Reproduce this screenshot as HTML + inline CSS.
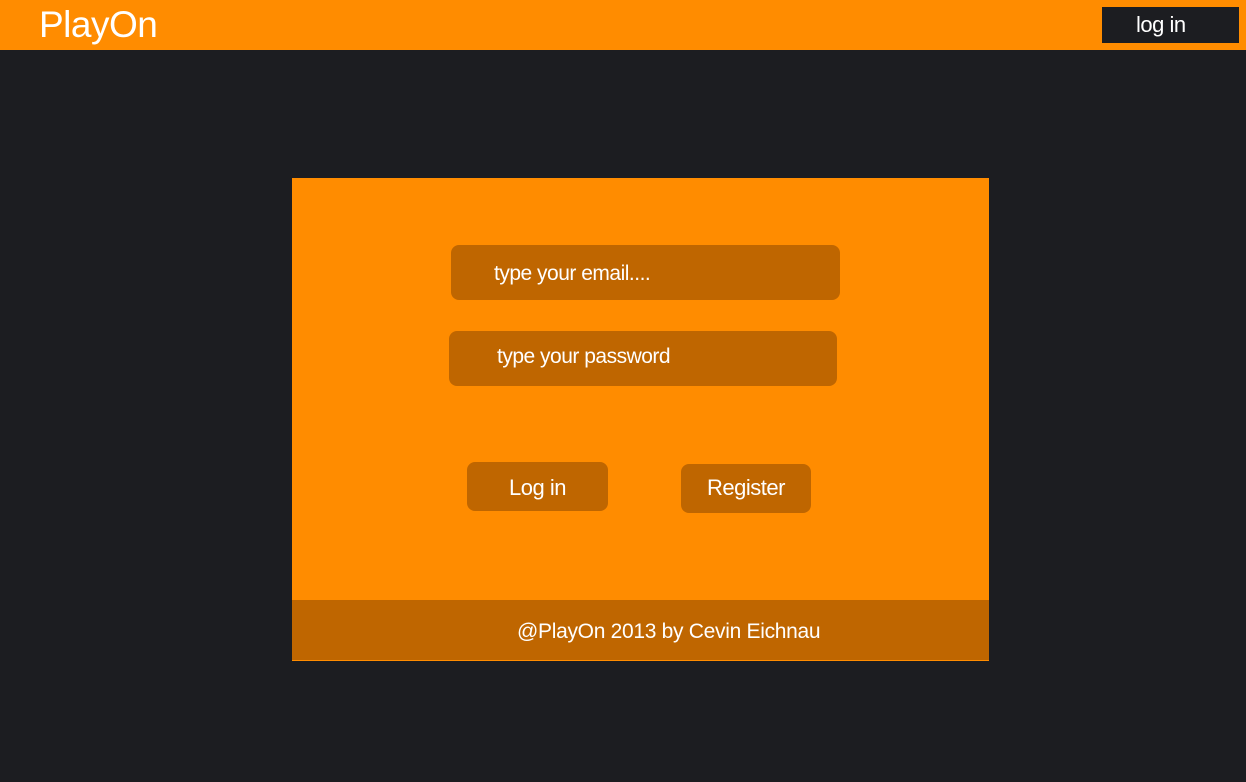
<!DOCTYPE html>
<html><head><style>
body{margin:0;width:1246px;height:782px;background:#1c1d21;font-family:"Liberation Sans",sans-serif;color:#fff;position:relative;overflow:hidden}
.hdr{position:absolute;left:0;top:0;width:1246px;height:50px;background:#ff8c00}
.logo{position:absolute;left:39px;top:4px;font-size:37px;letter-spacing:-0.5px}
.hbtn{position:absolute;left:1102px;top:7px;width:137px;height:36px;background:#1c1d21;font-size:22px;line-height:36px;letter-spacing:-0.5px}
.card{position:absolute;left:292px;top:178px;width:697px;height:483px;background:#ff8c00}
.box{position:absolute;background:#bf6600;border-radius:8px;font-size:21px;letter-spacing:-0.5px}
.foot{position:absolute;left:0;top:422px;width:697px;height:60px;background:#bf6600;font-size:21px;line-height:64px;letter-spacing:-0.3px}
</style></head><body>
<div class="hdr"><div class="logo">PlayOn</div><div class="hbtn"><span style="margin-left:34px">log in</span></div></div>
<div class="card">
<div class="box" style="left:159px;top:67px;width:389px;height:55px;line-height:57px"><span style="margin-left:43px">type your email....</span></div>
<div class="box" style="left:157px;top:153px;width:388px;height:55px;line-height:52px"><span style="margin-left:48px">type your password</span></div>
<div class="box" style="left:175px;top:284px;width:141px;height:49px;line-height:52px;text-align:center;font-size:22px">Log in</div>
<div class="box" style="left:389px;top:286px;width:130px;height:49px;line-height:48px;text-align:center;font-size:22px">Register</div>
<div class="foot"><span style="margin-left:225px">@PlayOn 2013 by Cevin Eichnau</span></div>
</div>
</body></html>
